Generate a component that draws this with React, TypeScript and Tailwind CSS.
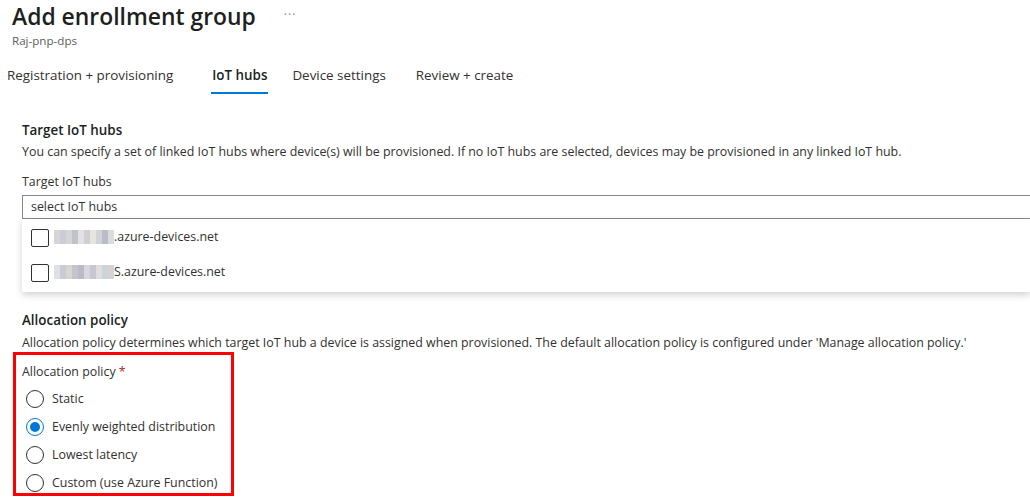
import { useState } from 'react';

const font = { fontFamily: '"Open Sans", "Noto Sans", sans-serif' };

const blurA = ['#d6d6d6', '#c9cdd6', '#d8d4d4', '#bfc3cc', '#e2e2e2', '#cfcfd4', '#e8e4de', '#d0d3da', '#bcbcc4', '#dcdcdc'];
const blurB = ['#e0e0e0', '#c7cbd4', '#d9d4d0', '#c4c4cc', '#b9bcc6', '#d8d8dc', '#c8c8cc', '#dedede', '#cfd2d8', '#d4d4d4'];

function Blurred({ shades }: { shades: string[] }) {
  return (
    <div className="flex h-[14px]">
      {shades.map((c, i) => (
        <div key={i} className="w-[6px] h-full" style={{ backgroundColor: c }} />
      ))}
    </div>
  );
}

function HubOption({ shades, tail }: { shades: string[]; tail: string }) {
  return (
    <div className="flex items-center h-[35px] pl-[9px]">
      <div className="w-[18px] h-[18px] border border-[#323130] rounded-[2px] bg-white" />
      <div className="ml-[5px] flex items-center">
        <Blurred shades={shades} />
        <span className="text-[12.4px] text-[#323130]">{tail}</span>
      </div>
    </div>
  );
}

function Radio({ label, checked, onClick }: { label: string; checked: boolean; onClick: () => void }) {
  return (
    <button onClick={onClick} className="flex items-center h-[28px] text-left">
      <span
        className={
          'w-[18px] h-[18px] rounded-full border flex items-center justify-center ' +
          (checked ? 'border-[#0078d4]' : 'border-[#323130]')
        }
      >
        {checked && <span className="w-[10px] h-[10px] rounded-full bg-[#0078d4]" />}
      </span>
      <span className="ml-[8px] text-[12.4px] text-[#323130]">{label}</span>
    </button>
  );
}

export default function App() {
  const [policy, setPolicy] = useState('even');
  const tabs = ['Registration + provisioning', 'IoT hubs', 'Device settings', 'Review + create'];

  return (
    <div className="w-[1030px] h-[500px] bg-white overflow-hidden text-[#323130]" style={font}>
      {/* Header */}
      <div className="pl-[12px] pt-[1px]">
        <div className="flex items-center">
          <h1 className="text-[22.9px] font-semibold leading-[32px] text-[#201f1e]">Add enrollment group</h1>
          <span className="ml-[28px] text-[12px] text-[#8a8886] tracking-[1px] -mt-[4px]">···</span>
        </div>
        <div className="text-[11.6px] text-[#605e5c] leading-[18px] -mt-[1px]">Raj-pnp-dps</div>
      </div>

      {/* Tabs */}
      <div className="flex pl-[7px] mt-[14px] h-[32px]">
        {tabs.map((t, i) => (
          <div
            key={t}
            className={
              'relative text-[13.4px] leading-[22px] ' +
              (i === 0 ? 'mr-[39px]' : i === 1 ? 'mr-[25px]' : 'mr-[30px]') +
              (i === 1 ? ' font-semibold text-[#201f1e]' : ' text-[#323130]')
            }
          >
            {t}
            {i === 1 && <div className="absolute -left-[1px] -right-[1px] top-[28px] h-[2px] bg-[#0078d4]" />}
          </div>
        ))}
      </div>

      {/* Target IoT hubs */}
      <div className="pl-[22px] mt-[24px]">
        <div className="text-[13.4px] font-semibold leading-[20px] text-[#201f1e]">Target IoT hubs</div>
        <div className="text-[12.4px] leading-[20px] mt-[2px]">
          You can specify a set of linked IoT hubs where device(s) will be provisioned. If no IoT hubs are selected, devices may be provisioned in any linked IoT hub.
        </div>
        <div className="text-[12.4px] leading-[20px] mt-[10px]">Target IoT hubs</div>
        <div className="mt-[3px] h-[24px] border border-[#8a8886] border-r-0 flex items-center pl-[8px] text-[12.4px]">
          select IoT hubs
        </div>
        <div className="h-[73px] bg-white shadow-[0_3px_7px_rgba(0,0,0,0.18)] pt-[1px]">
          <HubOption shades={blurA} tail=".azure-devices.net" />
          <HubOption shades={blurB} tail="S.azure-devices.net" />
        </div>
      </div>

      {/* Allocation policy */}
      <div className="pl-[22px] mt-[18px]">
        <div className="text-[13.4px] font-semibold leading-[20px] text-[#201f1e]">Allocation policy</div>
        <div className="text-[12.4px] leading-[20px] mt-[3px]">
          Allocation policy determines which target IoT hub a device is assigned when provisioned. The default allocation policy is configured under 'Manage allocation policy.'
        </div>
      </div>
      <div className="ml-[13px] mt-[-1px] w-[221px] h-[144px] border-[3px] border-[#ff0000] pl-[6px] pt-[7px]">
        <div className="text-[12.4px] leading-[20px]">
          Allocation policy <span className="text-[#a4262c]">*</span>
        </div>
        <div className="flex flex-col pl-[4px] mt-[3px]">
          <Radio label="Static" checked={policy === 'static'} onClick={() => setPolicy('static')} />
          <Radio label="Evenly weighted distribution" checked={policy === 'even'} onClick={() => setPolicy('even')} />
          <Radio label="Lowest latency" checked={policy === 'low'} onClick={() => setPolicy('low')} />
          <Radio label="Custom (use Azure Function)" checked={policy === 'custom'} onClick={() => setPolicy('custom')} />
        </div>
      </div>
    </div>
  );
}
